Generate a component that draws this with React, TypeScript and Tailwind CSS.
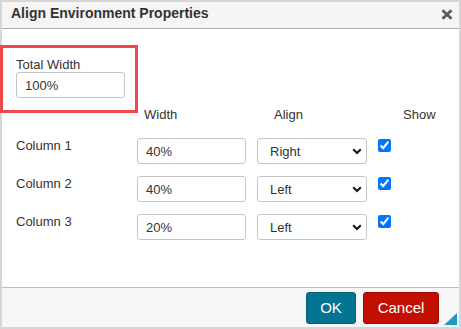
import React, { useState } from 'react';

interface ColumnRow {
  name: string;
  width: string;
  align: string;
  show: boolean;
}

const initialRows: ColumnRow[] = [
  { name: 'Column 1', width: '40%', align: 'Right', show: true },
  { name: 'Column 2', width: '40%', align: 'Left', show: true },
  { name: 'Column 3', width: '20%', align: 'Left', show: true },
];

const inputCls =
  'w-[109px] h-[26px] border border-[#c6c6c6] rounded-[3px] pl-[8px] text-[13px] text-[#333] bg-white outline-none';

const Chevron = () => (
  <svg width="10" height="7" viewBox="0 0 10 7">
    <path d="M1.2 1.3 L5 5 L8.8 1.3" stroke="#1a1a1a" strokeWidth="2.2" fill="none" />
  </svg>
);

const App: React.FC = () => {
  const [total, setTotal] = useState('100%');
  const [rows, setRows] = useState(initialRows);

  const update = (i: number, patch: Partial<ColumnRow>) => {
    setRows(rows.map((r, idx) => (idx === i ? { ...r, ...patch } : r)));
  };

  return (
    <div className="w-[461px] h-[329px] border-2 border-[#d6d6d6] bg-white flex flex-col font-['Liberation_Sans',Arial,sans-serif] text-[#333]">
      {/* title bar */}
      <div className="h-[27px] shrink-0 bg-[#f5f5f5] border-b border-[#a9a9a9] flex items-start justify-between pl-[9px] pr-[6px] pt-[3px]">
        <h2 className="text-[14px] leading-[16px] font-bold text-[#333]">Align Environment Properties</h2>
        <button className="mt-[4px] w-[12px] h-[11px] flex items-center justify-center">
          <svg width="12" height="11" viewBox="0 0 12 11">
            <path d="M1.5 1.2 L10.5 9.8 M10.5 1.2 L1.5 9.8" stroke="#5b5b5b" strokeWidth="2.8" />
          </svg>
        </button>
      </div>

      {/* body */}
      <div className="flex-1 pl-[14px] text-[13px] leading-[15px]">
        <div className="mt-[16px] -ml-[16px] w-[138px] h-[68px] border-[3px] border-[#f04848] pl-[13px] pt-[10px]">
          <label className="block leading-[14px]">Total Width</label>
          <input className={inputCls} value={total} onChange={(e) => setTotal(e.target.value)} />
        </div>

        <div className="-mt-[6px] mb-[16px] grid grid-cols-[110px_109px_110px_auto] gap-x-[11px]">
          <span />
          <span className="pl-[7px]">Width</span>
          <span className="pl-[17px]">Align</span>
          <span className="pl-[25px]">Show</span>
        </div>

        <div className="grid grid-cols-[110px_109px_110px_auto] gap-x-[11px] gap-y-[12px]">
          {rows.map((r, i) => (
            <React.Fragment key={r.name}>
              <span>{r.name}</span>
              <input className={inputCls} value={r.width} onChange={(e) => update(i, { width: e.target.value })} />
              <div className="relative w-[110px] h-[26px]">
                <select
                  value={r.align}
                  onChange={(e) => update(i, { align: e.target.value })}
                  className="appearance-none w-full h-full border border-[#c6c6c6] rounded-[3px] pl-[12px] text-[13px] text-[#333] bg-white outline-none"
                >
                  <option>Left</option>
                  <option>Center</option>
                  <option>Right</option>
                </select>
                <span className="absolute right-[5px] top-[10px] pointer-events-none">
                  <Chevron />
                </span>
              </div>
              <div className="pt-[1px]">
                <input
                  type="checkbox"
                  checked={r.show}
                  onChange={(e) => update(i, { show: e.target.checked })}
                  className="m-0 w-[13px] h-[13px] accent-[#0075ff]"
                />
              </div>
            </React.Fragment>
          ))}
        </div>
      </div>

      {/* footer */}
      <div className="relative h-[40px] shrink-0 border-t border-[#bdbdbd] bg-[#f6f6f6] flex justify-end items-start gap-[7px] pt-[4px] pr-[20px]">
        <button className="w-[50px] h-[32px] rounded-[3px] border border-[#0b5f76] bg-[#037491] text-white text-[15px]">
          OK
        </button>
        <button className="w-[76px] h-[32px] rounded-[3px] border border-[#9e0c00] bg-[#c20f00] text-white text-[15px]">
          Cancel
        </button>
        <svg className="absolute right-[2px] bottom-[2px]" width="13" height="12" viewBox="0 0 13 12">
          <polygon points="13,0 13,12 0,12" fill="#1a9ac5" />
        </svg>
      </div>
    </div>
  );
};

export default App;
